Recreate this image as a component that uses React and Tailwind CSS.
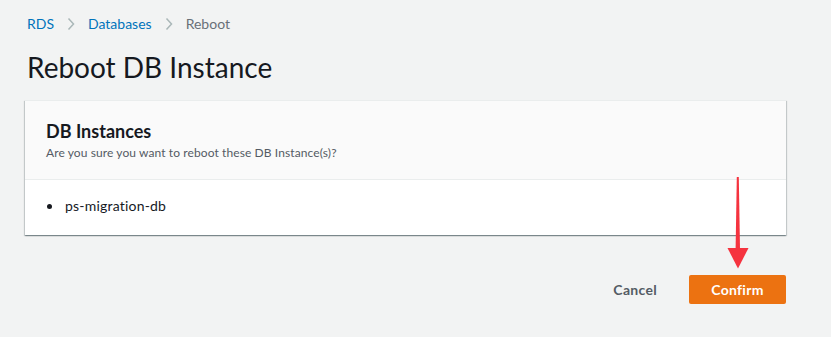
export default function App() {
  const font = { fontFamily: '"Lato", "Liberation Sans", sans-serif' };
  return (
    <div className="relative w-[831px] h-[337px] bg-[#f2f3f3] overflow-hidden" style={font}>
      <div className="pl-[25px] pr-[45px] pt-[14px]">
        <nav className="flex items-center h-[20px] text-[14px] leading-[20px] pl-[2px]">
          <span className="text-[#0073bb]">RDS</span>
          <svg className="mx-[13px]" width="8" height="14" viewBox="0 0 8 14">
            <path d="M1.5 1.5 L6.5 7 L1.5 12.5" fill="none" stroke="#aab7b8" strokeWidth="1.5" />
          </svg>
          <span className="text-[#0073bb]">Databases</span>
          <svg className="mx-[13px]" width="8" height="14" viewBox="0 0 8 14">
            <path d="M1.5 1.5 L6.5 7 L1.5 12.5" fill="none" stroke="#aab7b8" strokeWidth="1.5" />
          </svg>
          <span className="text-[#687078]">Reboot</span>
        </nav>
        <h1 className="mt-[16px] pl-[2px] text-[28px] leading-[34px] text-[#16191f]">Reboot DB Instance</h1>
        <div className="mt-[16px] bg-white shadow-[0_1px_1px_0_rgba(0,28,36,0.3),1px_1px_1px_0_rgba(0,28,36,0.15),-1px_1px_1px_0_rgba(0,28,36,0.15)] border-t border-[#eaeded]">
          <div className="bg-[#fafafa] border-b border-[#eaeded] px-[21px] pt-[19px] pb-[18px]">
            <h2 className="text-[18px] leading-[22px] font-bold text-[#16191f]">DB Instances</h2>
            <p className="mt-[3px] text-[12px] leading-[16px] text-[#545b64] tracking-[0.1px]">Are you sure you want to reboot these DB Instance(s)?</p>
          </div>
          <ul className="px-[21px] pt-[16px] pb-[19px] text-[14px] leading-[20px] text-[#16191f]">
            <li className="flex items-center">
              <span className="w-[5px] h-[5px] rounded-full bg-[#16191f] ml-[1px] mr-[13px]" />
              <span className="tracking-[0.2px]">ps-migration-db</span>
            </li>
          </ul>
        </div>
        <div className="mt-[40px] flex justify-end items-center gap-[32px]">
          <button className="text-[14px] font-bold text-[#545b64] leading-[20px] tracking-[0.3px]">Cancel</button>
          <button className="w-[97px] h-[29px] bg-[#ec7211] rounded-[2px] text-white text-[14px] font-bold leading-[20px] tracking-[0.3px]">Confirm</button>
        </div>
      </div>
      <svg className="absolute left-[720px] top-[170px]" width="40" height="110" viewBox="720 170 40 110">
        <polygon points="736.8,177 738.8,177 740,249 735.6,249" fill="#f5333f" />
        <polygon points="727.5,248 748.5,248 738,268.5" fill="#f5333f" />
      </svg>
    </div>
  );
}
